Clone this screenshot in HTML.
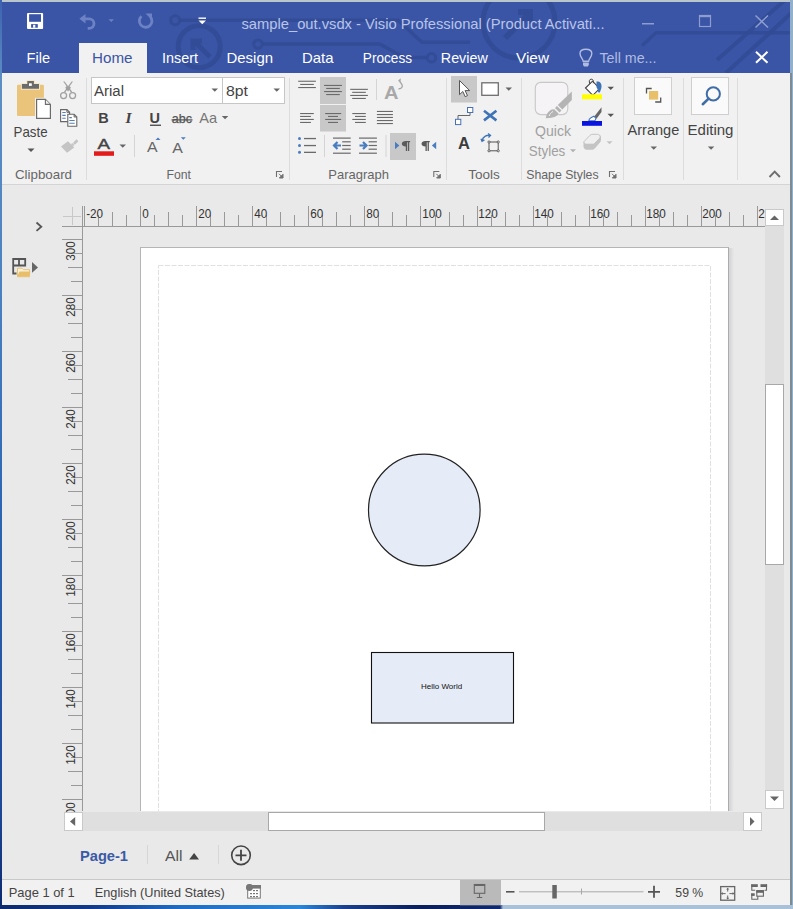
<!DOCTYPE html>
<html><head><meta charset="utf-8">
<style>
*{margin:0;padding:0;box-sizing:border-box}
html,body{width:793px;height:909px;overflow:hidden;background:#8fb3d6;font-family:"Liberation Sans",sans-serif}
.a{position:absolute}
#win{position:absolute;left:0;top:0;width:793px;height:909px;overflow:hidden}
.t{position:absolute;white-space:nowrap;line-height:1}
.sep{position:absolute;width:1px;background:#dadada}
.dd{position:absolute;width:0;height:0;border-left:3.5px solid transparent;border-right:3.5px solid transparent;border-top:4px solid #6a6a6a}
</style></head><body>
<div id="win">
<!-- frame -->
<div class="a" style="left:0;top:0;width:793px;height:2px;background:#b9c6cc"></div>
<div class="a" style="left:0;top:0;width:2px;height:909px;background:linear-gradient(180deg,#3d62b0 0px,#5d8fc4 80px,#4a80c0 300px,#2d66b4 500px,#1f4a9a 800px,#0d2a6e 909px)"></div>
<div class="a" style="left:790px;top:0;width:3px;height:909px;background:#93b0cb"></div>
<div class="a" style="left:790px;top:73px;width:2px;height:832px;background:#7d8b93"></div>
<div class="a" style="left:0;top:905px;width:793px;height:4px;background:linear-gradient(90deg,#0d2a6e 0px,#123a8a 90px,#1f6cc4 180px,#2a86d8 300px,#1a3f8c 345px,#0b1f5c 420px,#102a70 500px,#a8c0d8 503px,#a8c0d8 793px)"></div>

<!-- title + tabs blue -->
<div class="a" style="left:2px;top:2px;width:788px;height:71px;background:#3a55a6"></div>

<!-- home tab -->
<div class="a" style="left:79px;top:43px;width:68px;height:31px;background:#f1f1f1"></div>

<svg class="a" style="left:0;top:0" width="793" height="75">
<defs><clipPath id="tb"><rect x="2" y="2" width="788" height="71"/></clipPath></defs>
<g clip-path="url(#tb)" stroke="#314b94" fill="none" stroke-opacity="0.85">
<!-- circuit lines -->
<path d="M179 20.2H398l24 22H470" stroke-width="3.5"/>
<circle cx="175.2" cy="20.2" r="4.5" stroke-width="3"/>
<path d="M262 44.1H380l24 13.5H427" stroke-width="3.5"/>
<circle cx="258" cy="44.1" r="4.2" stroke-width="3"/>
<circle cx="431.5" cy="57.7" r="4.2" stroke-width="3"/>
<circle cx="199.2" cy="46.7" r="21" stroke-width="5"/>
<path d="M210 57l-14-14M193 50v-9h9" stroke-width="5"/>
<circle cx="519" cy="22" r="36" stroke-width="5"/>
<path d="M505 38l24-24M518 12h12v12" stroke-width="6"/>

<path d="M793 32.7H656l-14 13" stroke-width="3.5"/>
<path d="M785 0L717 60M800 5L726 73" stroke-width="4"/>
</g>
<rect x="79" y="43" width="68" height="31" fill="#f1f1f1"/>
<!-- save icon -->
<rect x="27" y="12.9" width="16.1" height="16.2" rx="1" fill="#fff"/>
<rect x="29.1" y="14.2" width="11.9" height="7.6" fill="#3a55a6"/>
<rect x="31.1" y="24.1" width="6.7" height="3.6" fill="#3a55a6"/>
<rect x="33.1" y="24.8" width="2.2" height="2.9" fill="#fff"/>
<!-- undo -->
<path d="M79.3 18.8l6.2-4.8v9.6z" fill="#6c82c4"/>
<path d="M85 18.8h4.2a4.8 4.8 0 0 1 0 9.6h-1.5" stroke="#6c82c4" stroke-width="2.8" fill="none"/>
<path d="M108.5 19.3h5.5l-2.75 2.6z" fill="#6c82c4"/>
<!-- redo -->
<path d="M141.5 16.2a6.3 6.3 0 1 0 8.8 0.5" stroke="#6c82c4" stroke-width="2.8" fill="none"/>
<path d="M145.5 13.5h6.5v6.5z" fill="#6c82c4"/>
<!-- QAT customize -->
<rect x="198.5" y="17.5" width="7.5" height="1.4" fill="#fff"/>
<path d="M198.5 20.5h7.5l-3.75 3.7z" fill="#fff"/>
<!-- title text -->
<text x="241.5" y="29" font-family="Liberation Sans" font-size="15" fill="#b9c4e6" textLength="363" lengthAdjust="spacingAndGlyphs">sample_out.vsdx - Visio Professional (Product Activati...</text>
<!-- window buttons -->
<rect x="642" y="23" width="12" height="1.5" fill="#8d9dd0"/>
<rect x="699.5" y="15.5" width="11" height="11" fill="none" stroke="#8d9dd0" stroke-width="1.2"/>
<rect x="699" y="15" width="12" height="2.2" fill="#8d9dd0"/>
<path d="M755.5 15.5l12.5 12M768 15.5l-12.5 12" stroke="#8d9dd0" stroke-width="1.5"/>
<!-- tabs -->
<g font-family="Liberation Sans" font-size="15" fill="#fff">
<text x="26.5" y="63" textLength="23.5" lengthAdjust="spacingAndGlyphs">File</text>
<text x="162" y="63" textLength="36" lengthAdjust="spacingAndGlyphs">Insert</text>
<text x="226.5" y="63" textLength="46.5" lengthAdjust="spacingAndGlyphs">Design</text>
<text x="302" y="63" textLength="31.5" lengthAdjust="spacingAndGlyphs">Data</text>
<text x="362.8" y="63" textLength="49.2" lengthAdjust="spacingAndGlyphs">Process</text>
<text x="440.8" y="63" textLength="47" lengthAdjust="spacingAndGlyphs">Review</text>
<text x="516" y="63" textLength="33" lengthAdjust="spacingAndGlyphs">View</text>
</g>
<text x="92" y="63" font-family="Liberation Sans" font-size="15" fill="#3a55a6" textLength="40.5" lengthAdjust="spacingAndGlyphs">Home</text>
<!-- tell me -->
<path d="M583.2 61.3c-0.3-2.5 -3.2-4.3 -3.2-7.7c0-3.4 2.7-4.3 5.9-4.3s5.9 0.9 5.9 4.3c0 3.4 -2.9 5.2 -3.2 7.7z" fill="none" stroke="#b0bce2" stroke-width="1.4"/>
<path d="M583 62.5h5.8v2.6l-1 1.4h-3.8l-1 -1.4z" fill="#b0bce2"/>
<text x="599.5" y="62.5" font-family="Liberation Sans" font-size="15" fill="#b0bce2" textLength="57" lengthAdjust="spacingAndGlyphs">Tell me...</text>
<path d="M756 51.8l11.5 11M767.5 51.8l-11.5 11" stroke="#fff" stroke-width="2"/>
</svg>

<!-- ribbon -->
<div class="a" style="left:2px;top:73px;width:788px;height:111px;background:#f1f1f1"></div>
<div class="a" style="left:2px;top:184px;width:788px;height:1px;background:#d4d4d4"></div>

<svg class="a" style="left:0;top:0" width="793" height="200">
<!-- group separators -->
<g fill="#dcdcdc">
<rect x="86" y="78" width="1" height="102"/>
<rect x="289" y="78" width="1" height="102"/>
<rect x="446" y="78" width="1" height="102"/>
<rect x="521" y="78" width="1" height="102"/>
<rect x="623" y="78" width="1" height="102"/>
<rect x="683" y="78" width="1" height="102"/>
<rect x="737" y="78" width="1" height="102"/>
</g>
<!-- group labels -->
<g font-family="Liberation Sans" font-size="13" fill="#666">
<text x="15" y="179" textLength="57" lengthAdjust="spacingAndGlyphs">Clipboard</text>
<text x="166.5" y="179" textLength="24.5" lengthAdjust="spacingAndGlyphs">Font</text>
<text x="328.3" y="179" textLength="60.6" lengthAdjust="spacingAndGlyphs">Paragraph</text>
<text x="468.3" y="179" textLength="31.6" lengthAdjust="spacingAndGlyphs">Tools</text>
<text x="526.2" y="179" textLength="72.4" lengthAdjust="spacingAndGlyphs">Shape Styles</text>
</g>
<!-- dialog launchers -->
<path d="M276.5 177v-5.5h5.5" stroke="#707070" stroke-width="1.1" fill="none"/><path d="M279.0 173.8l3.7 3.7M283.0 174.3v3.7h-3.7z" stroke="#707070" stroke-width="1" fill="#707070"/>
<path d="M433.8 177v-5.5h5.5" stroke="#707070" stroke-width="1.1" fill="none"/><path d="M436.3 173.8l3.7 3.7M440.3 174.3v3.7h-3.7z" stroke="#707070" stroke-width="1" fill="#707070"/>
<path d="M609.5 177v-5.5h5.5" stroke="#707070" stroke-width="1.1" fill="none"/><path d="M612.0 173.8l3.7 3.7M616.0 174.3v3.7h-3.7z" stroke="#707070" stroke-width="1" fill="#707070"/>
<!-- collapse chevron -->
<path d="M769.5 177l5.2-5.3l5.2 5.3" stroke="#6e6e6e" stroke-width="1.9" fill="none"/>

<!-- ===== Clipboard ===== -->
<rect x="17" y="84.7" width="26.9" height="31.3" rx="1" fill="#e9c47a"/>
<path d="M20.9 89.8v-6.7h5.4v-3.2h8.6v3.2h5.1v6.7z" fill="#f5e6c4"/>
<path d="M21.9 88.8v-4.7h5.4v-3.2h6.6v3.2h5.1v4.7z" fill="#6b6b6b"/>
<rect x="29" y="83.3" width="2.8" height="2.6" fill="#fff"/>
<rect x="35" y="97.8" width="17" height="22" fill="#f1f1f1"/>
<path d="M36.6 99.4h8.8l5 5v13.9h-13.8z" fill="#fff" stroke="#6b6b6b" stroke-width="1.2"/>
<path d="M45.4 99.4v5h5" fill="#f1f1f1" stroke="#6b6b6b" stroke-width="1.1"/>
<text x="13.6" y="137" font-family="Liberation Sans" font-size="15" fill="#444" textLength="34" lengthAdjust="spacingAndGlyphs">Paste</text>
<path d="M27.5 148.5h7l-3.5 3.5z" fill="#555"/>
<!-- scissors -->
<path d="M63.2 81.4l7.8 11.2l1.2 -0.8l-7.6 -10.4z" fill="#a0a0a0"/>
<path d="M73 81.4l-7.8 11.2l-1.2 -0.8l7.6 -10.4z" fill="#a0a0a0"/>
<path d="M66.5 86l1.6 2.3l1.6 -2.3l1.2 1.8l-2.8 3.8l-2.8 -3.8z" fill="#a0a0a0"/>
<circle cx="63.6" cy="95.6" r="3" fill="none" stroke="#a0a0a0" stroke-width="1.3"/>
<circle cx="72.6" cy="95.6" r="3" fill="none" stroke="#a0a0a0" stroke-width="1.3"/>
<!-- copy -->
<g stroke="#666" stroke-width="1.1" fill="#fff">
<path d="M60.6 109.6h6.3l2.7 2.7v9.3h-9z"/>
<path d="M67.8 114.3h6.3l2.7 2.7v9.3h-9z"/>
</g>
<path d="M66.9 109.6v2.7h2.7M74.1 114.3v2.7h2.7" stroke="#666" stroke-width="1" fill="none"/>
<g stroke="#5a7fa8" stroke-width="1.1">
<path d="M62.3 112.5h3.4M62.3 115.4h3.4M62.3 118.3h3.4M69.3 117.6h2.6M69.3 120.5h5.4M69.3 123.3h5.4"/>
</g>
<!-- format painter (disabled) -->
<path d="M76.5 139.3l1.9 1.9l-3.6 3.6l-1.9-1.9z" fill="#c4c4c4"/>
<path d="M67.9 141.3l6.4 6.2l-7.3 5.2l-6-6.2z" fill="#c4c4c4"/>
<path d="M72.2 143l2.1 2.1l-1.2 1.2l-2.1-2.1z" fill="#c4c4c4"/>

<!-- ===== Font ===== -->
<rect x="91.5" y="77.5" width="193" height="26" fill="#fff" stroke="#c6c6c6"/>
<rect x="222" y="78" width="1" height="25" fill="#c6c6c6"/>
<text x="94" y="95.6" font-family="Liberation Sans" font-size="14" fill="#444" textLength="30" lengthAdjust="spacingAndGlyphs">Arial</text>
<text x="226" y="95.6" font-family="Liberation Sans" font-size="14" fill="#444" textLength="22" lengthAdjust="spacingAndGlyphs">8pt</text>
<path d="M211.5 88.5h6.5l-3.25 3.25z" fill="#666"/>
<path d="M273.5 88.5h6.5l-3.25 3.25z" fill="#666"/>
<text x="98.3" y="122.8" font-family="Liberation Sans" font-size="14.5" font-weight="bold" fill="#444">B</text>
<text x="125.5" y="122.8" font-family="Liberation Serif" font-size="15.5" font-weight="bold" font-style="italic" fill="#444">I</text>
<text x="149.5" y="122.8" font-family="Liberation Sans" font-size="14.5" font-weight="bold" fill="#444">U</text>
<rect x="150" y="124.6" width="11" height="1.3" fill="#444"/>
<text x="171.8" y="122.7" font-family="Liberation Sans" font-size="13" fill="#555" stroke="#555" stroke-width="0.25" textLength="20.2" lengthAdjust="spacingAndGlyphs">abc</text>
<rect x="171.5" y="119.3" width="21" height="1.2" fill="#555"/>
<text x="199.3" y="122.7" font-family="Liberation Sans" font-size="14.5" fill="#777" textLength="17.8" lengthAdjust="spacingAndGlyphs">Aa</text>
<path d="M221.8 116h6.5l-3.25 3.25z" fill="#666"/>
<text x="97.5" y="149.1" font-family="Liberation Sans" font-size="15.5" fill="#444" stroke="#444" stroke-width="0.45" textLength="12.5" lengthAdjust="spacingAndGlyphs">A</text>
<rect x="94" y="151.3" width="20" height="4.5" fill="#e41b1b"/>
<path d="M119.5 144.5h6.5l-3.25 3.25z" fill="#666"/>
<rect x="134" y="135" width="1" height="22" fill="#d4d4d4"/>
<text x="147" y="151.8" font-family="Liberation Sans" font-size="14" fill="#666" textLength="10.6" lengthAdjust="spacingAndGlyphs">A</text>
<path d="M155.5 140h5l-2.5-2.5z" fill="#4a7cc0"/>
<text x="172.3" y="152.5" font-family="Liberation Sans" font-size="14" fill="#666" textLength="10.6" lengthAdjust="spacingAndGlyphs">A</text>
<path d="M180.8 137.3h5l-2.5 2.5z" fill="#4a7cc0"/>

<!-- ===== Paragraph ===== -->
<rect x="320" y="77" width="26" height="27" fill="#c8c8c8"/>
<rect x="320" y="105" width="26" height="26.5" fill="#c8c8c8"/>
<rect x="390" y="133" width="26" height="27" fill="#c8c8c8"/>
<g fill="#6a6a6a">
<rect x="298.2" y="80.7" width="17.7" height="1.1"/><rect x="300.2" y="83.9" width="13.6" height="1.1"/><rect x="298.2" y="87.0" width="17.7" height="1.1"/>
<rect x="324.1" y="84.9" width="17.8" height="1.1"/><rect x="326.2" y="87.9" width="13.6" height="1.1"/><rect x="324.1" y="91.0" width="17.8" height="1.1"/><rect x="326.2" y="94.0" width="13.6" height="1.1"/>
<rect x="350.2" y="88.8" width="17.7" height="1.1"/><rect x="352.2" y="91.8" width="13.6" height="1.1"/><rect x="350.2" y="94.9" width="17.7" height="1.1"/><rect x="352.2" y="97.9" width="13.6" height="1.1"/>
<rect x="300.1" y="113.0" width="13.7" height="1.1"/><rect x="300.1" y="115.9" width="10.8" height="1.1"/><rect x="300.1" y="118.9" width="13.7" height="1.1"/><rect x="300.1" y="121.9" width="10.8" height="1.1"/>
<rect x="325.2" y="113.0" width="16" height="1.1"/><rect x="328" y="115.9" width="10" height="1.1"/><rect x="325.2" y="118.9" width="16" height="1.1"/><rect x="328" y="121.9" width="10" height="1.1"/>
<rect x="352.3" y="113.0" width="13.5" height="1.1"/><rect x="355" y="115.9" width="10.8" height="1.1"/><rect x="352.3" y="118.9" width="13.5" height="1.1"/><rect x="355" y="121.9" width="10.8" height="1.1"/>
<rect x="376.9" y="110.9" width="16" height="1.1"/><rect x="376.9" y="114.0" width="16" height="1.1"/><rect x="376.9" y="116.9" width="16" height="1.1"/><rect x="376.9" y="120.0" width="16" height="1.1"/><rect x="376.9" y="123.0" width="16" height="1.1"/>
<!-- bullets lines -->
<rect x="304" y="137.9" width="12" height="1.3"/><rect x="304" y="144.9" width="12" height="1.3"/><rect x="304" y="151.7" width="12" height="1.3"/>
<rect x="333" y="137.5" width="17.7" height="1.2"/><rect x="342.2" y="141.2" width="8.5" height="1.2"/><rect x="342.2" y="144.9" width="8.5" height="1.2"/><rect x="342.2" y="148.6" width="8.5" height="1.2"/><rect x="333" y="152.6" width="17.7" height="1.2"/>
<rect x="359" y="137.5" width="17.9" height="1.2"/><rect x="368.6" y="141.2" width="8.3" height="1.2"/><rect x="368.6" y="144.9" width="8.3" height="1.2"/><rect x="368.6" y="148.6" width="8.3" height="1.2"/><rect x="359" y="152.6" width="17.9" height="1.2"/>
</g>
<g fill="#4a7cc0">
<circle cx="299.5" cy="138.5" r="1.5"/><circle cx="299.5" cy="145.5" r="1.5"/><circle cx="299.5" cy="152.3" r="1.5"/>
</g>
<g stroke="#4a7cc0" stroke-width="2.2" fill="none">
<path d="M341 145.5h-6.5M337.5 142l-3.5 3.5l3.5 3.5"/>
<path d="M359.5 145.5h6.5M363 142l3.5 3.5l-3.5 3.5"/>
</g>
<rect x="324" y="135" width="1" height="22" fill="#d4d4d4"/>
<rect x="385.5" y="135" width="1" height="22" fill="#d4d4d4"/>
<rect x="376" y="79" width="1" height="21" fill="#d4d4d4"/>
<!-- text direction -->
<text x="384" y="99" font-family="Liberation Sans" font-size="18" font-weight="bold" fill="#a8a8a8" textLength="14.5" lengthAdjust="spacingAndGlyphs">A</text>
<path d="M398.5 81l1.5 -1.2l-0.2 2.5M399.8 80.2c-0.5 2.5 3 3.5 2.5 6c-0.3 1.8 -2 2.8 -3.8 2.5" stroke="#a8a8a8" stroke-width="1.4" fill="none"/>
<!-- LTR / RTL -->
<path d="M395 141.8l4.3 3.7l-4.3 3.7z" fill="#4a7cc0"/>
<g fill="#5a5a5a">
<path d="M405.8 141h4.3v1.2h-0.9v8.9h-1.3v-8.9h-0.8v8.9h-1.3v-4.5c-2.4 0 -4 -1.2 -4 -2.8s1.6 -2.8 4 -2.8z"/>
<path d="M425.5 141h4.3v1.2h-0.9v8.9h-1.3v-8.9h-0.8v8.9h-1.3v-4.5c-2.4 0 -4 -1.2 -4 -2.8s1.6 -2.8 4 -2.8z"/>
</g>
<path d="M436.2 141.8l-4.3 3.7l4.3 3.7z" fill="#4a7cc0"/>

<!-- ===== Tools ===== -->
<rect x="451" y="76" width="26" height="26.5" fill="#c8c8c8"/>
<path d="M459.5 80.5v14.2l3.3-3.2l2.4 5.2l2.3-1.1l-2.4-5h4.6z" fill="#fff" stroke="#555" stroke-width="1"/>
<rect x="481.8" y="82.8" width="16.5" height="12.5" fill="#fff" stroke="#6d6d6d" stroke-width="1.3"/>
<path d="M505.5 87.5h6.5l-3.25 3.25z" fill="#666"/>
<path d="M470 112.5v3h-12v3.8" stroke="#666" stroke-width="1" fill="none"/>
<rect x="467.5" y="107.5" width="5.3" height="5" fill="#fff" stroke="#4672b4" stroke-width="1"/>
<rect x="455.5" y="119.3" width="5.3" height="5.3" fill="#fff" stroke="#4672b4" stroke-width="1"/>
<path d="M484 110.8l12.4 9.6M496.4 110.8l-12.4 9.6" stroke="#3f73b8" stroke-width="2.6"/>
<text x="458" y="148.8" font-family="Liberation Sans" font-size="16.5" font-weight="bold" fill="#3c3c3c">A</text>
<rect x="489" y="142" width="9.2" height="8.8" fill="none" stroke="#555" stroke-width="1"/>
<g fill="#fff" stroke="#555" stroke-width="0.9">
<circle cx="489" cy="142" r="1.1"/><circle cx="498.2" cy="142" r="1.1"/><circle cx="489" cy="150.8" r="1.1"/><circle cx="498.2" cy="150.8" r="1.1"/>
</g>
<path d="M482 140.5c1-4 5-6 8.5-5M488 133.5l2.5 1.8l-2 2.2M481 138.8l1 2.6l2.4-1.5" stroke="#3f73b8" stroke-width="1.3" fill="none"/>

<!-- ===== Shape Styles ===== -->
<path d="M567.8 99v-11.1a5.5 5.5 0 0 0 -5.5 -5.5h-21.5a5.5 5.5 0 0 0 -5.5 5.5v21.2a5.5 5.5 0 0 0 5.5 5.5h9" fill="#f5f3f5" stroke="#c8c8c8" stroke-width="1.1"/>
<path d="M550 114.6h12.3a5.5 5.5 0 0 0 5.5 -5.5v-10" fill="#f5f3f5" stroke="#c8c8c8" stroke-width="1.1"/>
<path d="M571.8 91.5v8.5l-9.5 9.5l-4.5-4.5z" fill="#b4b4b4"/>
<path d="M557 106l4.5 4.5l-2 2l-4.5-4.5z" fill="#b4b4b4"/>
<path d="M554.2 109.2l4.3 4.3c-1 2.5 -4 4.5 -12.7 4.7c0.5 -6 5 -9.5 8.4 -9z" fill="#b4b4b4"/>
<path d="M553 111.5c-2 1 -3.5 3 -3.8 4.5" stroke="#f1f1f1" stroke-width="1" fill="none"/>
<text x="535" y="136.3" font-family="Liberation Sans" font-size="15" fill="#a0a0a0" textLength="36" lengthAdjust="spacingAndGlyphs">Quick</text>
<text x="528.8" y="155.7" font-family="Liberation Sans" font-size="15" fill="#a0a0a0" textLength="36.5" lengthAdjust="spacingAndGlyphs">Styles</text>
<path d="M570 149.3h6l-3 3z" fill="#b0b0b0"/>
<!-- fill bucket -->
<path d="M585.5 88l7-6.8l7.3 7.3l-7 6.8z" fill="#fff" stroke="#444" stroke-width="1.1"/>
<path d="M590 84c-1.5-3 -0.5-4.8 1.3-4.8s2.5 1.5 2 4" stroke="#444" stroke-width="1" fill="none"/>
<path d="M596.5 81.5c3 -0.5 5.5 1.5 5 5.5c-0.3 2 -1 3.5 -1.6 5.5l-1.8 -0.3c0 -2 -0.5 -3.5 -1.6 -5" fill="#3f73b8"/>
<rect x="582" y="94.3" width="20" height="5" fill="#ffff00"/>
<path d="M607.5 86.8h6.5l-3.25 3.25z" fill="#555"/>
<!-- line brush -->
<path d="M601.5 107.3l-7.2 9.2l2.2 2.2l5 -6.7z" fill="#666"/>
<path d="M593.8 116.2l-2.5 1.3c-1.5 0.8 -2.5 2 -2.5 3.3h6c0.8 -1 1.2 -2 1 -2.8z" fill="#fff" stroke="#3f73b8" stroke-width="1.1"/>
<rect x="582" y="121" width="20" height="4.8" fill="#0a14e0"/>
<path d="M607.5 113.8h6.5l-3.25 3.25z" fill="#555"/>
<!-- effects -->
<path d="M583.5 142.5l6.5-7c0.8-0.8 1.8-1 2.8-1h5.2c1.5 0 3 1.5 3 3v2.5c0 1 -0.5 1.8 -1 2.5l-5 5.8c-0.8 0.8 -1.8 1.5 -3 1.5h-5.5c-1.5 0 -3 -1.5 -3 -3z" fill="#c4c4c4"/>
<path d="M584 141.5l6-6.2c0.8-0.8 1.8-1 2.8-1h5c1.2 0 2.3 1 2.3 2.3c0 0.8 -0.3 1.5 -0.8 2l-5.5 5.6h-7.5c-1.5 0 -2.5 -1.2 -2.3 -2.7z" fill="#efefef" stroke="#bdbdbd" stroke-width="0.8"/>
<path d="M606.5 141.3h6l-3 3z" fill="#c4c4c4"/>

<!-- ===== Arrange ===== -->
<rect x="634.5" y="77.5" width="37" height="37" fill="#fafafa" stroke="#cfcfcf"/>
<rect x="649" y="91" width="9.2" height="8.6" fill="#e8c06a"/>
<path d="M646.5 93.5v-5h5.2M655.2 102h5.5v-4.6" stroke="#555" stroke-width="1.3" fill="none"/>
<text x="627.5" y="135.3" font-family="Liberation Sans" font-size="15" fill="#444" textLength="51.8" lengthAdjust="spacingAndGlyphs">Arrange</text>
<path d="M650.5 146.5h6.5l-3.25 3.25z" fill="#666"/>
<!-- ===== Editing ===== -->
<rect x="691.5" y="77.5" width="37" height="37" fill="#fafafa" stroke="#cfcfcf"/>
<circle cx="713.3" cy="93.9" r="6.6" fill="none" stroke="#3e6da8" stroke-width="2"/>
<path d="M708.6 98.6l-5.8 5.6" stroke="#3e6da8" stroke-width="2.6" stroke-linecap="round"/>
<text x="687.5" y="135.3" font-family="Liberation Sans" font-size="15" fill="#444" textLength="46" lengthAdjust="spacingAndGlyphs">Editing</text>
<path d="M707.8 146.5h6.5l-3.25 3.25z" fill="#666"/>
</svg>

<!-- canvas area -->
<div class="a" style="left:2px;top:185px;width:788px;height:694px;background:#e9e9e9"></div>

<!-- status bar -->
<div class="a" style="left:2px;top:879px;width:788px;height:1px;background:#c8c8c8"></div>
<div class="a" style="left:2px;top:880px;width:788px;height:25px;background:#f1f1f1"></div>

<!-- page -->
<div class="a" style="left:140px;top:247px;width:589px;height:564px;background:#fff;border-left:1px solid #b5b5b5;border-top:1px solid #b5b5b5;border-right:1px solid #ababab"></div>
<div class="a" style="left:729px;top:248px;width:5px;height:563px;background:linear-gradient(90deg,#d2d2d5,#e9e9e9)"></div>
<svg class="a" style="left:0;top:0" width="793" height="811"><rect x="158.5" y="265.5" width="552" height="600" fill="none" stroke="#e0e0e0" stroke-width="1" stroke-dasharray="5 1.5"/></svg>

<!-- shapes -->
<svg class="a" style="left:0;top:0" width="793" height="909">
<circle cx="424.3" cy="510" r="55.8" fill="#e6ecf7" stroke="#222" stroke-width="1.2"/>
<rect x="371.5" y="652.5" width="142" height="70.5" fill="#e6ecf7" stroke="#111" stroke-width="1.1"/>
</svg>
<div class="t" style="left:421px;top:683px;font-size:8px;color:#111">Hello World</div>

<svg class="a" style="left:0;top:0;overflow:hidden" width="793" height="909">
<g stroke="#999999" stroke-width="1" shape-rendering="crispEdges">
<line x1="62" y1="226.5" x2="765" y2="226.5"/>
<line x1="82.5" y1="206" x2="82.5" y2="811"/>
<line x1="84.5" y1="206" x2="84.5" y2="226"/>
<line x1="98.5" y1="215" x2="98.5" y2="226"/>
<line x1="112.5" y1="212" x2="112.5" y2="226"/>
<line x1="126.5" y1="215" x2="126.5" y2="226"/>
<line x1="140.5" y1="206" x2="140.5" y2="226"/>
<line x1="154.5" y1="215" x2="154.5" y2="226"/>
<line x1="168.5" y1="212" x2="168.5" y2="226"/>
<line x1="182.5" y1="215" x2="182.5" y2="226"/>
<line x1="196.5" y1="206" x2="196.5" y2="226"/>
<line x1="210.5" y1="215" x2="210.5" y2="226"/>
<line x1="224.5" y1="212" x2="224.5" y2="226"/>
<line x1="238.5" y1="215" x2="238.5" y2="226"/>
<line x1="252.5" y1="206" x2="252.5" y2="226"/>
<line x1="266.5" y1="215" x2="266.5" y2="226"/>
<line x1="280.5" y1="212" x2="280.5" y2="226"/>
<line x1="294.5" y1="215" x2="294.5" y2="226"/>
<line x1="308.5" y1="206" x2="308.5" y2="226"/>
<line x1="322.5" y1="215" x2="322.5" y2="226"/>
<line x1="336.5" y1="212" x2="336.5" y2="226"/>
<line x1="350.5" y1="215" x2="350.5" y2="226"/>
<line x1="364.5" y1="206" x2="364.5" y2="226"/>
<line x1="378.5" y1="215" x2="378.5" y2="226"/>
<line x1="392.5" y1="212" x2="392.5" y2="226"/>
<line x1="406.5" y1="215" x2="406.5" y2="226"/>
<line x1="420.5" y1="206" x2="420.5" y2="226"/>
<line x1="435.5" y1="215" x2="435.5" y2="226"/>
<line x1="449.5" y1="212" x2="449.5" y2="226"/>
<line x1="463.5" y1="215" x2="463.5" y2="226"/>
<line x1="477.5" y1="206" x2="477.5" y2="226"/>
<line x1="491.5" y1="215" x2="491.5" y2="226"/>
<line x1="505.5" y1="212" x2="505.5" y2="226"/>
<line x1="519.5" y1="215" x2="519.5" y2="226"/>
<line x1="533.5" y1="206" x2="533.5" y2="226"/>
<line x1="547.5" y1="215" x2="547.5" y2="226"/>
<line x1="561.5" y1="212" x2="561.5" y2="226"/>
<line x1="575.5" y1="215" x2="575.5" y2="226"/>
<line x1="589.5" y1="206" x2="589.5" y2="226"/>
<line x1="603.5" y1="215" x2="603.5" y2="226"/>
<line x1="617.5" y1="212" x2="617.5" y2="226"/>
<line x1="631.5" y1="215" x2="631.5" y2="226"/>
<line x1="645.5" y1="206" x2="645.5" y2="226"/>
<line x1="659.5" y1="215" x2="659.5" y2="226"/>
<line x1="673.5" y1="212" x2="673.5" y2="226"/>
<line x1="687.5" y1="215" x2="687.5" y2="226"/>
<line x1="701.5" y1="206" x2="701.5" y2="226"/>
<line x1="715.5" y1="215" x2="715.5" y2="226"/>
<line x1="729.5" y1="212" x2="729.5" y2="226"/>
<line x1="743.5" y1="215" x2="743.5" y2="226"/>
<line x1="757.5" y1="206" x2="757.5" y2="226"/>
<line x1="62" y1="239.5" x2="82" y2="239.5"/>
<line x1="71" y1="253.5" x2="82" y2="253.5"/>
<line x1="68" y1="267.5" x2="82" y2="267.5"/>
<line x1="71" y1="281.5" x2="82" y2="281.5"/>
<line x1="62" y1="295.5" x2="82" y2="295.5"/>
<line x1="71" y1="309.5" x2="82" y2="309.5"/>
<line x1="68" y1="323.5" x2="82" y2="323.5"/>
<line x1="71" y1="337.5" x2="82" y2="337.5"/>
<line x1="62" y1="351.5" x2="82" y2="351.5"/>
<line x1="71" y1="365.5" x2="82" y2="365.5"/>
<line x1="68" y1="379.5" x2="82" y2="379.5"/>
<line x1="71" y1="393.5" x2="82" y2="393.5"/>
<line x1="62" y1="407.5" x2="82" y2="407.5"/>
<line x1="71" y1="421.5" x2="82" y2="421.5"/>
<line x1="68" y1="435.5" x2="82" y2="435.5"/>
<line x1="71" y1="449.5" x2="82" y2="449.5"/>
<line x1="62" y1="463.5" x2="82" y2="463.5"/>
<line x1="71" y1="477.5" x2="82" y2="477.5"/>
<line x1="68" y1="491.5" x2="82" y2="491.5"/>
<line x1="71" y1="505.5" x2="82" y2="505.5"/>
<line x1="62" y1="519.5" x2="82" y2="519.5"/>
<line x1="71" y1="533.5" x2="82" y2="533.5"/>
<line x1="68" y1="547.5" x2="82" y2="547.5"/>
<line x1="71" y1="561.5" x2="82" y2="561.5"/>
<line x1="62" y1="575.5" x2="82" y2="575.5"/>
<line x1="71" y1="589.5" x2="82" y2="589.5"/>
<line x1="68" y1="603.5" x2="82" y2="603.5"/>
<line x1="71" y1="617.5" x2="82" y2="617.5"/>
<line x1="62" y1="631.5" x2="82" y2="631.5"/>
<line x1="71" y1="645.5" x2="82" y2="645.5"/>
<line x1="68" y1="659.5" x2="82" y2="659.5"/>
<line x1="71" y1="673.5" x2="82" y2="673.5"/>
<line x1="62" y1="687.5" x2="82" y2="687.5"/>
<line x1="71" y1="701.5" x2="82" y2="701.5"/>
<line x1="68" y1="715.5" x2="82" y2="715.5"/>
<line x1="71" y1="729.5" x2="82" y2="729.5"/>
<line x1="62" y1="743.5" x2="82" y2="743.5"/>
<line x1="71" y1="757.5" x2="82" y2="757.5"/>
<line x1="68" y1="771.5" x2="82" y2="771.5"/>
<line x1="71" y1="785.5" x2="82" y2="785.5"/>
<line x1="62" y1="799.5" x2="82" y2="799.5"/>
</g>
<g font-family="Liberation Sans" font-size="13" fill="#333">
<text transform="translate(86.2,218.2) scale(0.9,1)">-20</text>
<text transform="translate(142.2,218.2) scale(0.9,1)">0</text>
<text transform="translate(198.2,218.2) scale(0.9,1)">20</text>
<text transform="translate(254.2,218.2) scale(0.9,1)">40</text>
<text transform="translate(310.2,218.2) scale(0.9,1)">60</text>
<text transform="translate(366.2,218.2) scale(0.9,1)">80</text>
<text transform="translate(422.2,218.2) scale(0.9,1)">100</text>
<text transform="translate(478.2,218.2) scale(0.9,1)">120</text>
<text transform="translate(534.2,218.2) scale(0.9,1)">140</text>
<text transform="translate(590.2,218.2) scale(0.9,1)">160</text>
<text transform="translate(646.2,218.2) scale(0.9,1)">180</text>
<text transform="translate(702.2,218.2) scale(0.9,1)">200</text>
<text transform="translate(758.2,218.2) scale(0.9,1)">220</text>
<text transform="translate(75.2,260.8) rotate(-90) scale(0.9,1)">300</text>
<text transform="translate(75.2,316.8) rotate(-90) scale(0.9,1)">280</text>
<text transform="translate(75.2,372.8) rotate(-90) scale(0.9,1)">260</text>
<text transform="translate(75.2,428.8) rotate(-90) scale(0.9,1)">240</text>
<text transform="translate(75.2,484.8) rotate(-90) scale(0.9,1)">220</text>
<text transform="translate(75.2,540.8) rotate(-90) scale(0.9,1)">200</text>
<text transform="translate(75.2,596.8) rotate(-90) scale(0.9,1)">180</text>
<text transform="translate(75.2,652.8) rotate(-90) scale(0.9,1)">160</text>
<text transform="translate(75.2,708.8) rotate(-90) scale(0.9,1)">140</text>
<text transform="translate(75.2,764.8) rotate(-90) scale(0.9,1)">120</text>
<text transform="translate(75.2,821.8) rotate(-90) scale(0.9,1)">100</text>
</g>
<g stroke="#c8c8c8" shape-rendering="crispEdges"><line x1="63" y1="216.5" x2="81" y2="216.5"/><line x1="72.5" y1="207" x2="72.5" y2="225"/></g>
</svg>
<!-- scrollbars -->
<div class="a" style="left:765px;top:226px;width:19px;height:564px;background:#dfdfdf"></div>
<div class="a" style="left:765px;top:384px;width:19px;height:181px;background:#fff;border:1px solid #a8a8a8"></div>
<div class="a" style="left:765px;top:209px;width:19px;height:17px;background:#fff;border:1px solid #c9c9c9"></div>
<div class="a" style="left:765px;top:790px;width:19px;height:19px;background:#fff;border:1px solid #c9c9c9"></div>
<div class="a" style="left:64px;top:812px;width:679px;height:19px;background:#dfdfdf"></div>
<div class="a" style="left:64px;top:812px;width:19px;height:19px;background:#fff;border:1px solid #c9c9c9"></div>
<div class="a" style="left:743px;top:812px;width:19px;height:19px;background:#fff;border:1px solid #c9c9c9"></div>
<div class="a" style="left:268px;top:812px;width:277px;height:19px;background:#fff;border:1px solid #a8a8a8"></div>

<svg class="a" style="left:0;top:0" width="793" height="909">
<!-- left panel icons -->
<path d="M36.5 222.5l4.8 4.2l-4.8 4.2" stroke="#555" stroke-width="1.8" fill="none"/>
<path d="M17 273.5h-3.8v-14.5h12v6.5h-12M19 259v6.5" stroke="#555" stroke-width="1.8" fill="none"/>
<path d="M16.5 267h13.5v10.5h-13.5z" fill="#e9e9e9"/><path d="M17.5 268.2h4.5l1.5 1.5h6v7h-12z" fill="#fbf0d6" stroke="#e8be6a" stroke-width="0.9"/>
<path d="M17 276.5l2.5-5h11l-1.5 5z" fill="#e8be6a"/>
<path d="M32 262l6 5.4l-6 5.4z" fill="#666"/>
<!-- scroll arrows -->
<path d="M770 220h9l-4.5-4.5z" fill="#666"/>
<path d="M770 796.5h9l-4.5 4.5z" fill="#666"/>
<path d="M75.2 817v9l-5.2-4.5z" fill="#666"/>
<path d="M750 817v9l4.5-4.5z" fill="#666"/>
<!-- page tabs -->
<text x="80" y="861.2" font-family="Liberation Sans" font-size="15.5" font-weight="bold" fill="#3a5aa6" textLength="48" lengthAdjust="spacingAndGlyphs">Page-1</text>
<rect x="147" y="845" width="1" height="19" fill="#d6d6d6"/>
<text x="165" y="861.2" font-family="Liberation Sans" font-size="15.5" fill="#555" textLength="17.5" lengthAdjust="spacingAndGlyphs">All</text>
<path d="M189.2 859.6h9.8l-4.9-6.6z" fill="#444"/>
<rect x="218" y="845" width="1" height="19" fill="#d6d6d6"/>
<circle cx="241" cy="855.3" r="9.3" fill="none" stroke="#444" stroke-width="1.6"/>
<path d="M235.5 855.3h11M241 849.8v11" stroke="#444" stroke-width="1.8"/>
<!-- status bar -->
<g font-family="Liberation Sans" font-size="13.4" fill="#444">
<text x="8.7" y="897.3" textLength="66" lengthAdjust="spacingAndGlyphs">Page 1 of 1</text>
<text x="94.8" y="897.3" textLength="130" lengthAdjust="spacingAndGlyphs">English (United States)</text>
<text x="675.3" y="897.3" textLength="28" lengthAdjust="spacingAndGlyphs">59 %</text>
</g>
<circle cx="249.5" cy="887.5" r="3.3" fill="#777"/>
<rect x="247.7" y="885.5" width="12.6" height="12.6" fill="#fff" stroke="#777" stroke-width="1"/>
<rect x="252" y="885" width="9" height="3.6" fill="#777"/>
<circle cx="249.5" cy="887.5" r="3.4" fill="#777"/>
<g fill="#777">
<rect x="253" y="890" width="2" height="1.2"/><rect x="256" y="890" width="2" height="1.2"/>
<rect x="250" y="893" width="2" height="1.2"/><rect x="253" y="893" width="2" height="1.2"/><rect x="256" y="893" width="2" height="1.2"/>
<rect x="250" y="896" width="2" height="1.2"/><rect x="253" y="896" width="2" height="1.2"/><rect x="256" y="896" width="2" height="1.2"/>
</g>
<!-- presentation mode button -->
<rect x="460" y="880" width="41" height="25.3" fill="#bababa"/>
<rect x="474.3" y="884.5" width="10.5" height="8.8" fill="none" stroke="#666" stroke-width="1.1"/>
<rect x="474" y="884" width="11" height="2" fill="#666"/>
<path d="M479.5 893.5v3.8M476.8 897.5h5.4" stroke="#666" stroke-width="1.1"/>
<!-- zoom slider -->
<rect x="506" y="891" width="8.5" height="1.6" fill="#555"/>
<rect x="519" y="891.3" width="124.5" height="1" fill="#a8a8a8"/>
<rect x="581" y="888.5" width="1" height="6" fill="#a8a8a8"/>
<rect x="552.3" y="885" width="4.5" height="13.5" fill="#666"/>
<path d="M648 891.8h12M654 885.8v12" stroke="#555" stroke-width="1.8"/>
<!-- fit page -->
<rect x="720.7" y="886.6" width="14" height="13.6" fill="none" stroke="#666" stroke-width="1.3"/>
<g stroke="#666" stroke-width="1" fill="none">
<path d="M727.7 888.3v3.3M727.7 895.5v3.5M721.4 893.6h4.2M729.4 893.6h4.2"/>
</g>
<g fill="#666">
<path d="M726.2 889.6l1.5-1.8l1.5 1.8z"/><path d="M726.2 897.7l1.5 1.8l1.5-1.8z"/>
<path d="M722.7 892.1l-1.8 1.5l1.8 1.5z"/><path d="M732.6 892.1l1.8 1.5l-1.8 1.5z"/>
</g>
<!-- switch windows -->
<g fill="#666">
<rect x="751.2" y="884.2" width="6.6" height="2.8"/>
<rect x="760.5" y="884.2" width="6.6" height="2.8"/>
<rect x="756.3" y="890.2" width="7.6" height="2.6"/>
<rect x="751.2" y="893.3" width="3.5" height="2.6"/>
</g>
<g fill="none" stroke="#666" stroke-width="1.1">
<path d="M751.8 884.5v5.7h3.4"/>
<path d="M766.5 884.5v5.7h-2"/>
<rect x="756.8" y="890.7" width="6.6" height="5.5"/>
<path d="M751.8 893.5v5.8h6v-3"/>
</g>
</svg>

</div>
</body></html>
